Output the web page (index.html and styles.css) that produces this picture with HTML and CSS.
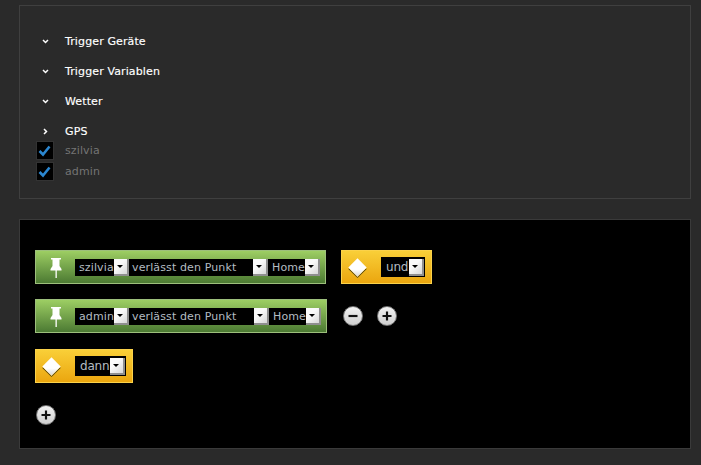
FILE: index.html
```html
<!DOCTYPE html>
<html lang="de">
<head>
<meta charset="utf-8">
<title>Trigger</title>
<link rel="stylesheet" href="styles.css">
</head>
<body>
<section class="panel top">
  <div class="group"><svg class="chev" viewBox="0 0 7 7"><path d="M1 2l2.500 2.500L6 2" /></svg><span>Trigger Geräte</span></div>
  <div class="group"><svg class="chev" viewBox="0 0 7 7"><path d="M1 2l2.500 2.500L6 2" /></svg><span>Trigger Variablen</span></div>
  <div class="group"><svg class="chev" viewBox="0 0 7 7"><path d="M1 2l2.500 2.500L6 2" /></svg><span>Wetter</span></div>
  <div class="group last"><svg class="chev" viewBox="0 0 7 7"><path d="M2 1l2.500 2.500L2 6" /></svg><span>GPS</span></div>
  <label class="check"><span class="box"><svg viewBox="0 0 16 16"><path d="M2.500 8l3.500 3.500L12.500 3.500" /></svg></span><span>szilvia</span></label>
  <label class="check"><span class="box"><svg viewBox="0 0 16 16"><path d="M2.500 8l3.500 3.500L12.500 3.500" /></svg></span><span>admin</span></label>
</section>
<section class="panel bottom">
  <div class="line">
    <div class="block green">
      <svg class="pin" viewBox="0 0 12 20"><path d="M1 0h10v1.500H9.500V8l2 3v1.500H6.800V20H5.500v-7.500H.5V11l2-3V1.500H1z" /></svg>
      <div class="selects">
        <span class="sel w1"><span class="val">szilvia</span><span class="btn"></span></span>
        <span class="sel w2"><span class="val">verlässt den Punkt</span><span class="btn"></span></span>
        <span class="sel w3"><span class="val">Home</span><span class="btn"></span></span>
      </div>
    </div>
    <div class="block orange first wu">
      <span class="diamond"></span>
      <span class="sel big su"><span class="val">und</span><span class="btn"></span></span>
    </div>
  </div>
  <div class="line">
    <div class="block green wide">
      <svg class="pin" viewBox="0 0 12 20"><path d="M1 0h10v1.500H9.500V8l2 3v1.500H6.800V20H5.500v-7.500H.5V11l2-3V1.500H1z" /></svg>
      <div class="selects">
        <span class="sel w1"><span class="val">admin</span><span class="btn"></span></span>
        <span class="sel w2b"><span class="val">verlässt den Punkt</span><span class="btn"></span></span>
        <span class="sel w3"><span class="val">Home</span><span class="btn"></span></span>
      </div>
    </div>
    <div class="round minus"><svg viewBox="0 0 20 20"><path d="M5 10h10" /></svg></div>
    <div class="round plus"><svg viewBox="0 0 20 20"><path d="M5 10h10M10 5v10" /></svg></div>
  </div>
  <div class="line">
    <div class="block orange wd">
      <span class="diamond"></span>
      <span class="sel big sd"><span class="val">dann</span><span class="btn"></span></span>
    </div>
  </div>
  <div class="round add"><svg viewBox="0 0 20 20"><path d="M5 10h10M10 5v10" /></svg></div>
</section>
</body>
</html>
```
FILE: styles.css
```css
* { box-sizing: border-box; }
html, body { height: 100%; }
body {
  margin: 0;
  padding: 5px 10px 0 19px;
  background: #2a2a2a;
  font-family: "DejaVu Sans", sans-serif;
  overflow: hidden;
}
.panel { border: 1px solid #3f3f3f; width: 672px; }
.top { height: 194px; padding: 20px 0 0 16px; background: #2a2a2a; }
.bottom { height: 230px; margin-top: 20px; padding: 30px 0 0 15px; background: #000; border-color: #3a3a3a; }

.group {
  height: 30px;
  display: flex;
  align-items: center;
  padding-left: 6px;
  color: #fff;
  font-size: 11px;
  letter-spacing: 0.12px;
  -webkit-text-stroke: 0.15px #fff;
}
.group.last { height: 30px; margin-bottom: -6px; }
.chev { width: 7px; height: 7px; margin-right: 16px; flex: none; }
.chev path { fill: none; stroke: #fff; stroke-width: 1.500; }
.check {
  height: 21px;
  display: flex;
  align-items: center;
  color: #747474;
  font-size: 11px;
  letter-spacing: 0.12px;
}
.box {
  width: 18px;
  height: 19px;
  margin-right: 11px;
  background: #000;
  border: 1px solid #333;
  display: flex;
  align-items: center;
  justify-content: center;
}
.box svg { width: 16px; height: 16px; }
.box path { fill: none; stroke: #2b86cf; stroke-width: 2.600; }

.line { display: flex; align-items: center; height: 34px; margin-bottom: 15px; }
.line:nth-child(2) { margin-bottom: 16px; }
.line:nth-child(3) { margin-bottom: 22px; }
.block {
  height: 34px;
  display: flex;
  align-items: center;
  border: 1px solid;
}
.green {
  width: 291px;
  padding-left: 14px;
  background: linear-gradient(#9dce63, #4c7a33);
  border-color: #9dbf7c;
}
.green.wide { width: 292px; }
.orange {
  padding-left: 9px;
  background: linear-gradient(#f9cf38, #eba60f);
  border-color: #fbd24a;
}
.wu { width: 91px; }
.wd { width: 98px; }
.first { margin-left: 15px; }
.pin { width: 12px; height: 20px; margin-right: 13px; flex: none; fill: #fff; margin-top: 1px; }
.selects { display: flex; height: 17px; background: #000; }
.sel {
  display: flex;
  align-items: center;
  justify-content: space-between;
  height: 17px;
  background: #000;
  color: #b4bcc2;
  font-size: 11px;
  letter-spacing: 0.12px;
}
.val { padding-left: 4px; white-space: nowrap; }
.btn {
  width: 15px;
  height: 17px;
  flex: none;
  position: relative;
  background: linear-gradient(135deg, #fafafa 40%, #d8d8d8);
  border-right: 2px solid #8f8f8f;
  border-bottom: 2px solid #8f8f8f;
}
.btn::after {
  content: "";
  position: absolute;
  left: 3px;
  top: 6px;
  border: 3.500px solid transparent;
  border-top-color: #000;
  border-bottom: 0;
}
.w1 { width: 53px; }
.w2 { width: 140px; }
.w2b { width: 141px; }
.w3 { width: 51px; }
.big { height: 20px; font-size: 12px; letter-spacing: -0.2px; padding-right: 1px; margin-left: 17px; }
.big .val { padding-left: 5px; }
.su { width: 44px; }
.sd { width: 51px; }
.diamond {
  width: 13px;
  height: 13px;
  transform: rotate(45deg);
  background: linear-gradient(135deg, #fff 60%, #d5d5d5);
  box-shadow: 1px 1px 0 #5a4a10;
  flex: none;
}
.round {
  width: 20px;
  height: 20px;
  border-radius: 50%;
  background: linear-gradient(#f2f2f2, #cfcfcf);
  border: 1px solid #777;
  flex: none;
}
.round svg { display: block; width: 18px; height: 18px; }
.round path { fill: none; stroke: #111; stroke-width: 2.400; }
.minus { margin-left: 16px; }
.plus { margin-left: 14px; }
.add { margin-left: 1px; }
```
